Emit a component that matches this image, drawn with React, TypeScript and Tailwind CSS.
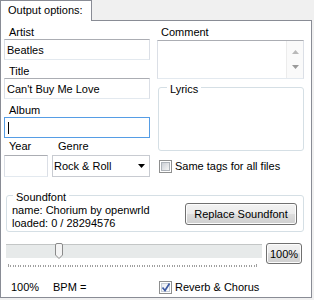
import React from "react";

function TextBox({ w, h, children, focused }: { w: string; h: string; children?: React.ReactNode; focused?: boolean }) {
  return (
    <div
      className={`${w} ${h} bg-white border flex items-center pl-[2px] ${
        focused
          ? "border-[#569de5]"
          : "border-t-[#abadb3] border-l-[#dbdfe6] border-r-[#dbdfe6] border-b-[#e3e9ef]"
      }`}
    >
      {children}
    </div>
  );
}

function Check({ checked }: { checked?: boolean }) {
  return (
    <div className="w-[13px] h-[13px] border border-[#8e8f8f] bg-white p-[1px] shrink-0">
      <div
        className={`w-full h-full border ${
          checked
            ? "border-[#c6cdd6] bg-[linear-gradient(135deg,#e9edf2,#ffffff)]"
            : "border-[#aeb3b9] bg-[linear-gradient(135deg,#cbcfd5,#f6f6f6)]"
        } relative`}
      >
        {checked && (
          <svg className="absolute -left-[1px] -top-[2px]" width="10" height="11" viewBox="0 0 10 11">
            <path d="M1.5 5.5 L4 8.5 L8.5 1.5" stroke="#3e5ba3" strokeWidth="1.7" fill="none" />
          </svg>
        )}
      </div>
    </div>
  );
}

const btn =
  "border border-[#707070] rounded-[3px] bg-[linear-gradient(#f2f2f2_0%,#ebebeb_50%,#dddddd_50%,#cfcfcf_100%)] shadow-[inset_0_0_0_1px_#fcfcfc] flex items-center justify-center";

function Ticks() {
  const ticks = [];
  for (let i = 0; i <= 100; i++) {
    const x = Math.round(2 + i * 2.48);
    ticks.push(<rect key={i} x={x} y={i === 0 || i === 100 ? 0 : 1} width="1" height={i === 0 || i === 100 ? 3 : 2} fill="#a0a0a0" />);
  }
  return (
    <svg width="256" height="4" className="block">
      {ticks}
    </svg>
  );
}

export default function App() {
  return (
    <div className="w-[314px] h-[300px] bg-[#f0f0f0] text-[11px] leading-[14px] text-black font-['Liberation_Sans',Arial,sans-serif]">
      <div className="flex h-[21px]">
        <div className="w-[92px] h-[21px] bg-white border-l border-t border-r border-[#898c95] pl-[7px] pt-[2px]">
          Output options:
        </div>
        <div className="w-[220px] border-b border-[#898c95]" />
      </div>
      <div className="w-[312px] h-[277px] bg-white border-l border-r border-b border-[#898c95] pl-[3px] pt-[4px]">
        <div className="flex">
          {/* left column */}
          <div className="w-[146px] flex flex-col">
            <div className="pl-[5px] h-[14px]">Artist</div>
            <TextBox w="w-[146px]" h="h-[21px]">Beatles</TextBox>
            <div className="pl-[5px] h-[14px] mt-[4px]">Title</div>
            <TextBox w="w-[146px]" h="h-[21px]">Can't Buy Me Love</TextBox>
            <div className="pl-[5px] h-[14px] mt-[4px]">Album</div>
            <TextBox w="w-[146px]" h="h-[21px]" focused>
              <div className="w-[1px] h-[12px] bg-black ml-[1px]" />
            </TextBox>
            <div className="flex mt-[1px]">
              <div className="w-[44px] flex flex-col">
                <div className="pl-[5px] h-[14px]">Year</div>
                <div className="mt-[2px]">
                  <TextBox w="w-[44px]" h="h-[22px]" />
                </div>
              </div>
              <div className="w-[98px] ml-[4px] flex flex-col">
                <div className="pl-[6px] h-[14px]">Genre</div>
                <div className="mt-[2px] w-[98px] h-[22px] border border-[#c8cbd1] bg-white flex items-center justify-between pl-[1px] pr-[4px]">
                  <span>Rock &amp; Roll</span>
                  <svg width="7" height="4" viewBox="0 0 7 4">
                    <path d="M0 0 H7 L3.5 4 Z" fill="#000" />
                  </svg>
                </div>
              </div>
            </div>
          </div>
          {/* right column */}
          <div className="w-[147px] ml-[7px] flex flex-col">
            <div className="pl-[4px] h-[14px]">Comment</div>
            <div className="mt-[1px] h-[39px] border border-t-[#abadb3] border-l-[#dbdfe6] border-r-[#dbdfe6] border-b-[#e3e9ef] bg-white flex justify-end">
              <div className="w-[17px] h-full bg-[#fafafa] border-l border-[#ececec] flex flex-col items-center justify-between py-[9px]">
                <svg width="7" height="4" viewBox="0 0 7 4">
                  <path d="M0 4 H7 L3.5 0 Z" fill="#b9b9b9" />
                </svg>
                <svg width="7" height="4" viewBox="0 0 7 4">
                  <path d="M0 0 H7 L3.5 4 Z" fill="#9a9a9a" />
                </svg>
              </div>
            </div>
            <div className="relative mt-[8px] ml-[1px] w-[146px] h-[64px] border border-[#d5dfe5] rounded-[3px]">
              <div className="absolute -top-[6px] left-[8px] bg-white px-[3px] leading-[14px]">Lyrics</div>
            </div>
            <div className="flex items-center mt-[8px] ml-[2px]">
              <Check />
              <span className="ml-[3px]">Same tags for all files</span>
            </div>
          </div>
        </div>
        {/* soundfont */}
        <div className="relative mt-[18px] ml-[2px] w-[298px] h-[37px] border border-[#d5dfe5] rounded-[3px] flex justify-between pl-[5px] pr-[6px]">
          <div className="absolute -top-[6px] left-[6px] bg-white px-[3px]">Soundfont</div>
          <div className="pt-[8px] leading-[13px]">
            <div>name: Chorium by openwrld</div>
            <div>loaded: 0 / 28294576</div>
          </div>
          <div className={`${btn} mt-[7px] w-[112px] h-[22px]`}>Replace Soundfont</div>
        </div>
        {/* slider */}
        <div className="flex mt-[11px] ml-[2px]">
          <div className="w-[256px] flex flex-col">
            <div className="relative mt-[1px] h-[14px] bg-[#e7eaea] border-t border-[#c3c6c6]">
              <svg className="absolute left-[49px] -top-[2px]" width="8" height="16" viewBox="0 0 8 16">
                <path d="M0.5 2 Q0.5 0.5 2 0.5 H6 Q7.5 0.5 7.5 2 V12 L4 15.5 L0.5 12 Z" fill="#f4f4f4" stroke="#8a8a8a" strokeWidth="1" />
              </svg>
            </div>
            <div className="mt-[6px]">
              <Ticks />
            </div>
          </div>
          <div className={`${btn} ml-[4px] w-[36px] h-[21px]`}>100%</div>
        </div>
        {/* bottom row */}
        <div className="flex items-center mt-[12px] h-[14px]">
          <span className="ml-[7px] w-[42px]">100%</span>
          <span className="w-[106px]">BPM =</span>
          <Check checked />
          <span className="ml-[3px]">Reverb &amp; Chorus</span>
        </div>
      </div>
    </div>
  );
}
